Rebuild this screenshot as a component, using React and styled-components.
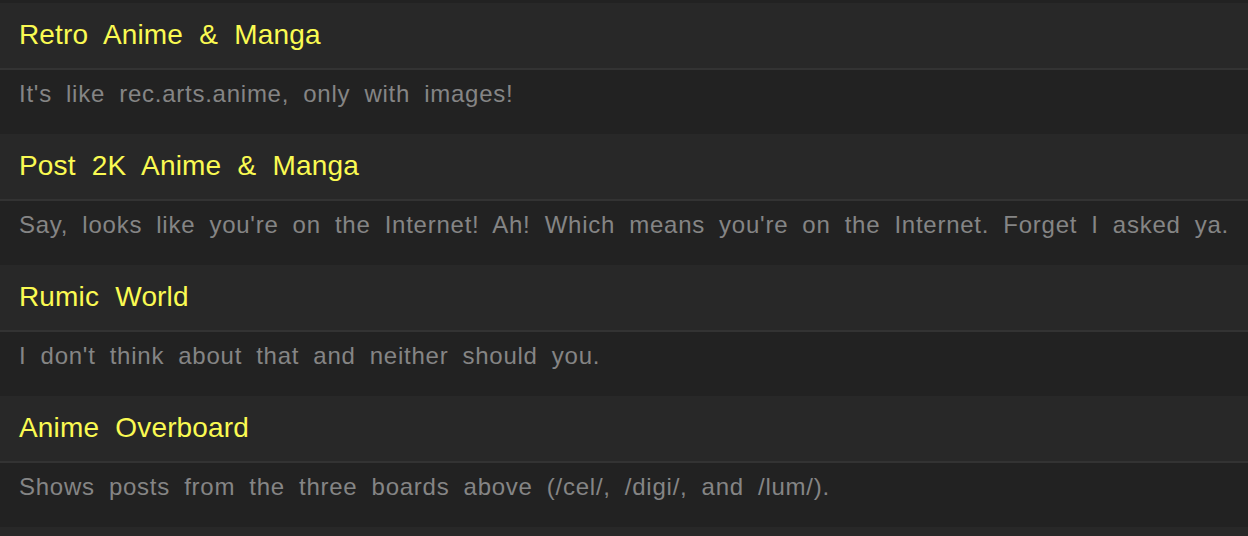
import styled, { createGlobalStyle } from 'styled-components';

const GlobalStyle = createGlobalStyle`
	html, body {
		margin: 0;
		padding: 0;
		background: #282828;
	}
	body {
		overflow: hidden;
	}
`;

const boards = [
	{ id: 'cel', title: 'Retro Anime & Manga', desc: "It's like rec.arts.anime, only with images!" },
	{
		id: 'digi',
		title: 'Post 2K Anime & Manga',
		desc: "Say, looks like you're on the Internet! Ah! Which means you're on the Internet. Forget I asked ya.",
	},
	{ id: 'lum', title: 'Rumic World', desc: "I don't think about that and neither should you." },
	{ id: 'ob', title: 'Anime Overboard', desc: 'Shows posts from the three boards above (/cel/, /digi/, and /lum/).' },
];

export default function App() {
	return (
		<>
			<GlobalStyle />
			<StyledList>
				{boards.map(board => (
					<StyledBoard key={board.id}>
						<StyledTitle>
							<a href={`#${board.id}`}>{board.title}</a>
						</StyledTitle>
						<StyledDesc>{board.desc}</StyledDesc>
					</StyledBoard>
				))}
			</StyledList>
		</>
	);
}
/* --------------------Styling --------------------------------*/
const StyledList = styled.main`
	display: flex;
	flex-direction: column;
	border-top: 3px solid #222222;
	font-family: 'Liberation Sans', Arial, sans-serif;
`;

const StyledBoard = styled.section`
	display: flex;
	flex-direction: column;
`;

const StyledTitle = styled.h2`
	display: flex;
	align-items: center;
	height: 67px;
	margin: 0;
	padding: 0 19px 2px;
	box-sizing: border-box;
	background: #282828;
	border-bottom: 2px solid #333333;
	font-size: 28px;
	font-weight: 400;
	letter-spacing: 0.15px;
	word-spacing: 8.3px;

	a {
		color: #fafa52;
		text-decoration: none;
	}
`;

const StyledDesc = styled.p`
	display: flex;
	align-items: center;
	height: 64px;
	margin: 0;
	padding: 0 19px 17px;
	box-sizing: border-box;
	background: #222222;
	color: #858585;
	font-size: 24px;
	letter-spacing: 0.75px;
	word-spacing: 6.7px;
	white-space: nowrap;
`;
